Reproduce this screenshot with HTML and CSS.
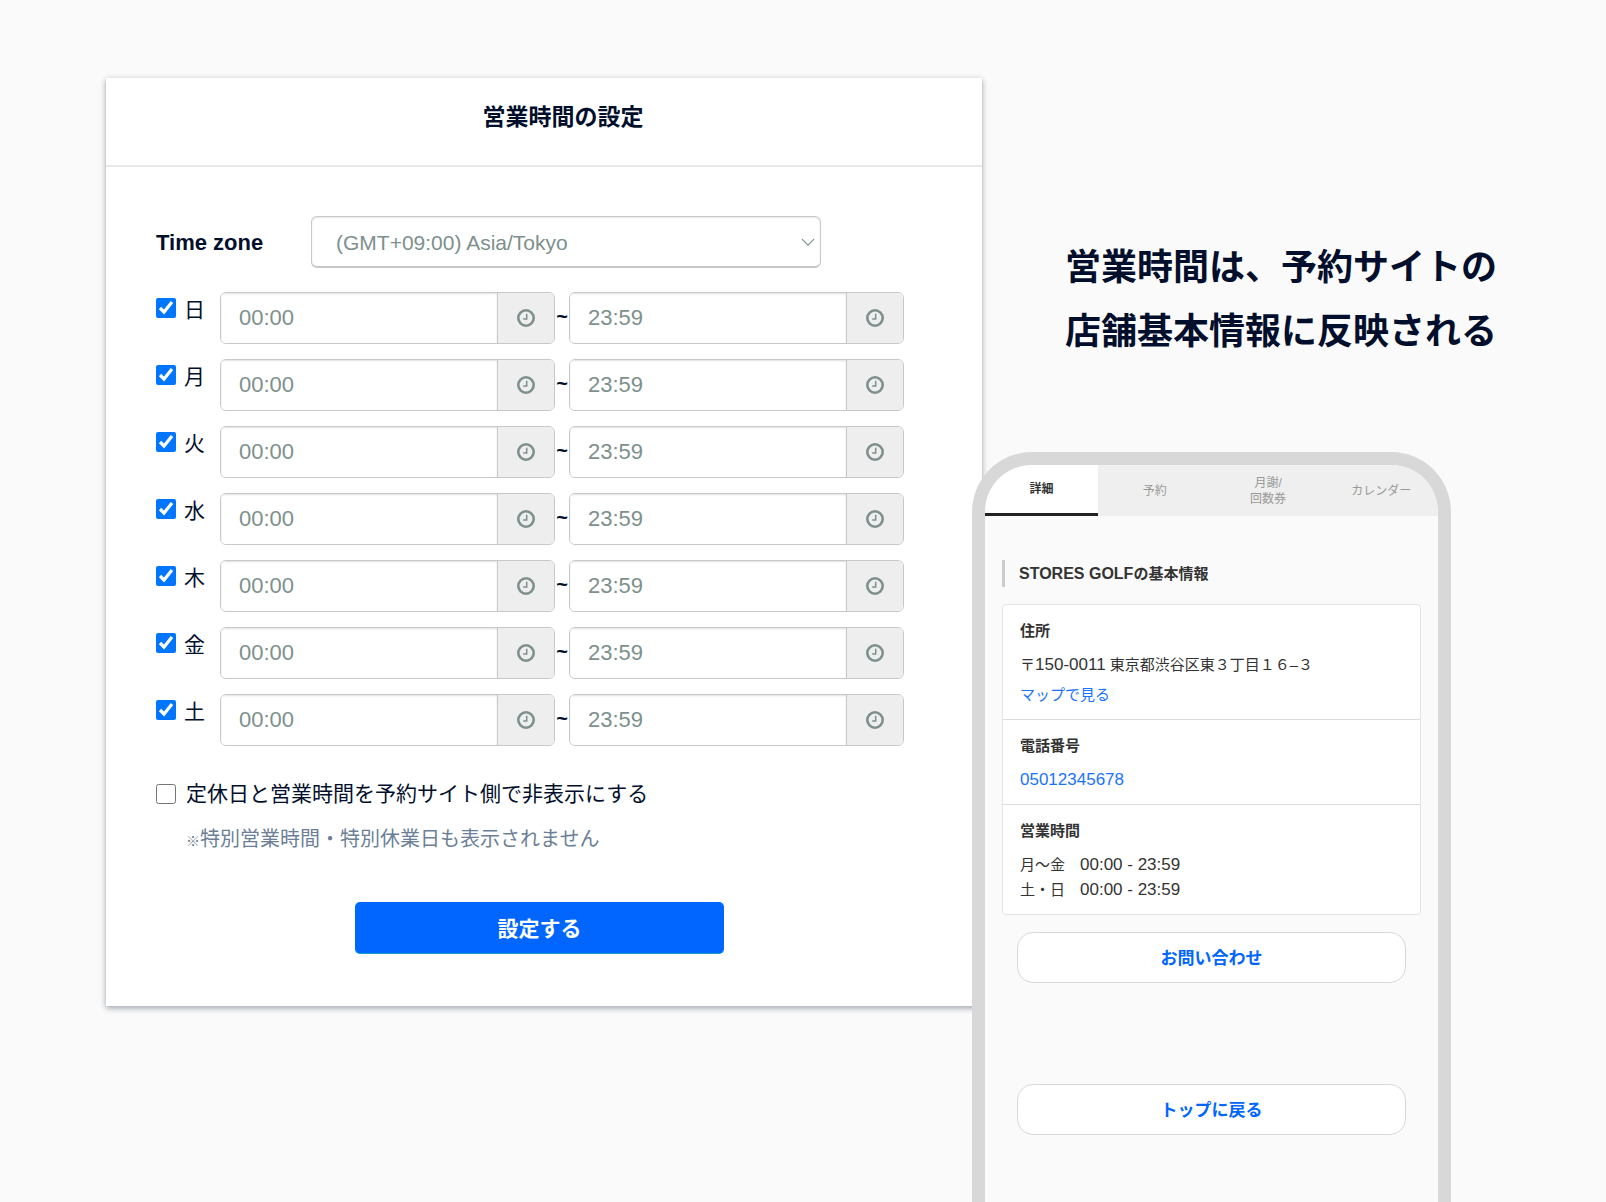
FILE: index.html
```
<!DOCTYPE html>
<html lang="ja">
<head>
<meta charset="utf-8">
<meta name="viewport" content="width=device-width, initial-scale=1">
<title>営業時間の設定</title>
<link rel="stylesheet" href="styles.css">
</head>
<body>
<svg class="sprite" aria-hidden="true">
  <symbol id="clock" viewBox="0 0 18 18">
    <circle cx="9" cy="9" r="7.7" fill="none" stroke="currentColor" stroke-width="2.6"/>
    <path d="M9.7 4.7V10H6.2" fill="none" stroke="currentColor" stroke-width="1.5"/>
  </symbol>
</svg>
<main class="stage">
  <form class="card">
    <header class="card-header">
      <h1 class="card-title">営業時間の設定</h1>
    </header>
    <div class="card-body">
      <div class="zone">
        <label class="zone-label" for="zone">Time zone</label>
        <div class="zone-field">
          <select class="zone-select" id="zone"><option>(GMT+09:00) Asia/Tokyo</option></select>
          <svg class="zone-arrow" viewBox="0 0 14 9" aria-hidden="true"><path d="M1 1.2 7 7.2 13 1.2" fill="none" stroke="currentColor" stroke-width="1.2"/></svg>
        </div>
      </div>
      <div class="days">
        <div class="day">
          <label class="day-label"><input class="check" type="checkbox" checked><span class="day-name">日</span></label>
          <div class="time"><input class="time-input" type="text" value="00:00" aria-label="日 開始"><button class="time-button" type="button" aria-label="時刻を選択"><svg class="clock"><use href="#clock"/></svg></button></div>
          <span class="tilde">~</span>
          <div class="time"><input class="time-input" type="text" value="23:59" aria-label="日 終了"><button class="time-button" type="button" aria-label="時刻を選択"><svg class="clock"><use href="#clock"/></svg></button></div>
        </div>
        <div class="day">
          <label class="day-label"><input class="check" type="checkbox" checked><span class="day-name">月</span></label>
          <div class="time"><input class="time-input" type="text" value="00:00" aria-label="月 開始"><button class="time-button" type="button" aria-label="時刻を選択"><svg class="clock"><use href="#clock"/></svg></button></div>
          <span class="tilde">~</span>
          <div class="time"><input class="time-input" type="text" value="23:59" aria-label="月 終了"><button class="time-button" type="button" aria-label="時刻を選択"><svg class="clock"><use href="#clock"/></svg></button></div>
        </div>
        <div class="day">
          <label class="day-label"><input class="check" type="checkbox" checked><span class="day-name">火</span></label>
          <div class="time"><input class="time-input" type="text" value="00:00" aria-label="火 開始"><button class="time-button" type="button" aria-label="時刻を選択"><svg class="clock"><use href="#clock"/></svg></button></div>
          <span class="tilde">~</span>
          <div class="time"><input class="time-input" type="text" value="23:59" aria-label="火 終了"><button class="time-button" type="button" aria-label="時刻を選択"><svg class="clock"><use href="#clock"/></svg></button></div>
        </div>
        <div class="day">
          <label class="day-label"><input class="check" type="checkbox" checked><span class="day-name">水</span></label>
          <div class="time"><input class="time-input" type="text" value="00:00" aria-label="水 開始"><button class="time-button" type="button" aria-label="時刻を選択"><svg class="clock"><use href="#clock"/></svg></button></div>
          <span class="tilde">~</span>
          <div class="time"><input class="time-input" type="text" value="23:59" aria-label="水 終了"><button class="time-button" type="button" aria-label="時刻を選択"><svg class="clock"><use href="#clock"/></svg></button></div>
        </div>
        <div class="day">
          <label class="day-label"><input class="check" type="checkbox" checked><span class="day-name">木</span></label>
          <div class="time"><input class="time-input" type="text" value="00:00" aria-label="木 開始"><button class="time-button" type="button" aria-label="時刻を選択"><svg class="clock"><use href="#clock"/></svg></button></div>
          <span class="tilde">~</span>
          <div class="time"><input class="time-input" type="text" value="23:59" aria-label="木 終了"><button class="time-button" type="button" aria-label="時刻を選択"><svg class="clock"><use href="#clock"/></svg></button></div>
        </div>
        <div class="day">
          <label class="day-label"><input class="check" type="checkbox" checked><span class="day-name">金</span></label>
          <div class="time"><input class="time-input" type="text" value="00:00" aria-label="金 開始"><button class="time-button" type="button" aria-label="時刻を選択"><svg class="clock"><use href="#clock"/></svg></button></div>
          <span class="tilde">~</span>
          <div class="time"><input class="time-input" type="text" value="23:59" aria-label="金 終了"><button class="time-button" type="button" aria-label="時刻を選択"><svg class="clock"><use href="#clock"/></svg></button></div>
        </div>
        <div class="day">
          <label class="day-label"><input class="check" type="checkbox" checked><span class="day-name">土</span></label>
          <div class="time"><input class="time-input" type="text" value="00:00" aria-label="土 開始"><button class="time-button" type="button" aria-label="時刻を選択"><svg class="clock"><use href="#clock"/></svg></button></div>
          <span class="tilde">~</span>
          <div class="time"><input class="time-input" type="text" value="23:59" aria-label="土 終了"><button class="time-button" type="button" aria-label="時刻を選択"><svg class="clock"><use href="#clock"/></svg></button></div>
        </div>
      </div>
      <label class="hide"><input class="check" type="checkbox"><span>定休日と営業時間を予約サイト側で非表示にする</span></label>
      <p class="note"><span class="note-mark">※</span>特別営業時間・特別休業日も表示されません</p>
      <button class="submit" type="submit">設定する</button>
    </div>
  </form>

  <section class="side">
    <h2 class="message">営業時間は、予約サイトの<br>店舗基本情報に反映される</h2>
    <div class="phone">
      <nav class="tabs">
        <a class="tab tab-active" href="#detail">詳細</a>
        <a class="tab" href="#reserve">予約</a>
        <a class="tab" href="#ticket">月謝/<br>回数券</a>
        <a class="tab" href="#calendar">カレンダー</a>
      </nav>
      <div class="screen" id="detail">
        <h3 class="shop-title"><span class="shop-name">STORES GOLF</span>の基本情報</h3>
        <div class="info">
          <section class="info-item">
            <h4 class="info-title">住所</h4>
            <p class="info-text">〒<span class="digits">150-0011</span> 東京都渋谷区東３丁目１６–３</p>
            <p class="info-text info-map"><a class="link" href="#map">マップで見る</a></p>
          </section>
          <section class="info-item">
            <h4 class="info-title">電話番号</h4>
            <p class="info-text"><a class="link digits" href="tel:05012345678">05012345678</a></p>
          </section>
          <section class="info-item">
            <h4 class="info-title">営業時間</h4>
            <p class="info-text">月〜金　<span class="digits">00:00 - 23:59</span></p>
            <p class="info-text">土・日　<span class="digits">00:00 - 23:59</span></p>
          </section>
        </div>
        <div class="actions">
          <button class="action" type="button">お問い合わせ</button>
          <button class="action" type="button">トップに戻る</button>
        </div>
      </div>
    </div>
  </section>
</main>
</body>
</html>
```
FILE: styles.css
```
*, *::before, *::after { box-sizing: border-box; }

body {
  margin: 0;
  background: #fafafa;
  color: #020f2c;
  font-family: "Liberation Sans", "Noto Sans CJK JP", sans-serif;
  font-size: 21px;
}

h1, h2, h3, h4, p { margin: 0; }
button, input, select { font: inherit; margin: 0; }
a { text-decoration: none; }

.sprite { position: absolute; width: 0; height: 0; }

.stage {
  display: grid;
  grid-template-columns: minmax(0, 1fr) 479px;
  min-height: 100vh;
  padding: 78px 155px 0 106px;
}

/* Settings card */
.card {
  align-self: start;
  margin-right: -10px;
  background: #fff;
  box-shadow: 0 2px 6px rgba(10, 30, 50, .4);
}

.card-header {
  padding: 24px 0 33px 38px;
  border-bottom: 2px solid #e8e8e8;
  text-align: center;
}

.card-title {
  font-size: 23px;
  font-weight: 700;
  line-height: 30px;
}

.card-body { padding: 49px 59px 52px 50px; }

.zone {
  display: flex;
  align-items: center;
  margin-right: 102px;
}

.zone-label {
  width: 155px;
  padding-top: 2px;
  font-size: 22px;
  font-weight: 700;
}

.zone-field { position: relative; flex: 1; }

.zone-select {
  display: block;
  width: 100%;
  height: 52px;
  padding: 2px 40px 0 24px;
  border: 1px solid #c8c8c8;
  border-bottom-width: 2px;
  border-radius: 6px;
  background: #fff;
  box-shadow: inset 0 1px 2px rgba(0, 0, 0, .1);
  color: #7d908d;
  appearance: none;
}

.zone-arrow {
  position: absolute;
  top: 22px;
  right: 6px;
  width: 14px;
  height: 9px;
  color: #7d908d;
  pointer-events: none;
}

.days {
  display: grid;
  gap: 15px;
  margin: 24px 19px 0 0;
}

.day {
  display: grid;
  grid-template-columns: 64px minmax(0, 1fr) 14px minmax(0, 1fr);
}

.day-label {
  display: flex;
  align-items: flex-start;
  gap: 8px;
  padding-top: 6px;
}

.check {
  flex: none;
  width: 20px;
  height: 20px;
}

.day-name { line-height: 24px; }

.time {
  display: flex;
  height: 52px;
  border: 1px solid #c8c8c8;
  border-radius: 6px;
  overflow: hidden;
}

.time-input {
  flex: 1;
  min-width: 0;
  padding: 0 18px;
  border: 0;
  background: #fff;
  box-shadow: inset 0 1px 2px rgba(0, 0, 0, .12);
  color: #7d908d;
  font-size: 22px;
}

.time-button {
  display: grid;
  place-items: center;
  width: 57px;
  padding: 0;
  border: 0;
  border-left: 1px solid #c8c8c8;
  background: #eee;
  color: #7d908d;
}

.clock { width: 18px; height: 18px; }

.tilde {
  font-size: 20px;
  font-weight: 700;
  line-height: 48px;
  text-align: center;
}

.hide {
  display: flex;
  align-items: center;
  gap: 10px;
  margin-top: 32px;
  line-height: 32px;
}

.note {
  margin-top: 14px;
  padding-left: 30px;
  color: #6b8096;
  font-size: 20px;
  line-height: 30px;
}

.note-mark {
  font-size: 14px;
  font-weight: 700;
}

.submit {
  display: block;
  width: 48%;
  height: 52px;
  margin: 46px auto 0;
  padding: 0 0 2px;
  border: 0;
  border-bottom: 1px solid #16a0c0;
  border-radius: 5px;
  background: #06f;
  color: #fff;
  font-weight: 700;
}

/* Message and phone */
.side {
  position: relative;
  display: flex;
  flex-direction: column;
}

.message {
  padding: 158px 0 88px 93px;
  font-size: 36px;
  font-weight: 700;
  line-height: 64px;
  white-space: nowrap;
}

.phone {
  flex: 1;
  border: 13px solid #d8d8d8;
  border-bottom: 0;
  border-radius: 60px 60px 0 0;
  background: #fafafa;
  overflow: hidden;
  color: #333;
  font-size: 15px;
}

.tabs {
  display: grid;
  grid-template-columns: repeat(4, 1fr);
  height: 51px;
}

.tab {
  display: grid;
  place-content: center;
  background: #efefef;
  color: #999;
  font-size: 12px;
  line-height: 16px;
  text-align: center;
}

.tab-active {
  border-bottom: 3px solid #222;
  background: #fff;
  color: #333;
  font-weight: 700;
}

.screen { padding: 44px 17px 66px; }

.shop-title {
  padding-left: 14px;
  border-left: 3px solid #ccc;
  font-size: 15px;
  font-weight: 700;
  line-height: 27px;
}

.shop-name { font-size: 16px; }

.info {
  margin-top: 17px;
  border: 1px solid #e4e4e4;
  border-radius: 4px;
  background: #fff;
}

.info-item { padding: 13px 17px 12px; }
.info-item + .info-item { border-top: 1px solid #dcdcdc; }

.info-title {
  margin-bottom: 9px;
  font-size: 15px;
  font-weight: 700;
  line-height: 25px;
}

.info-text { line-height: 25px; }
.info-map { margin-top: 5px; }
.digits { font-size: 17px; }
.link { color: #1a73ff; }

.actions {
  display: grid;
  gap: 101px;
  padding: 17px 15px 0;
}

.action {
  height: 51px;
  padding: 0 0 2px;
  border: 1px solid #d8d8d8;
  border-radius: 16px;
  background: #fff;
  color: #06f;
  font-size: 17px;
  font-weight: 700;
}
```
